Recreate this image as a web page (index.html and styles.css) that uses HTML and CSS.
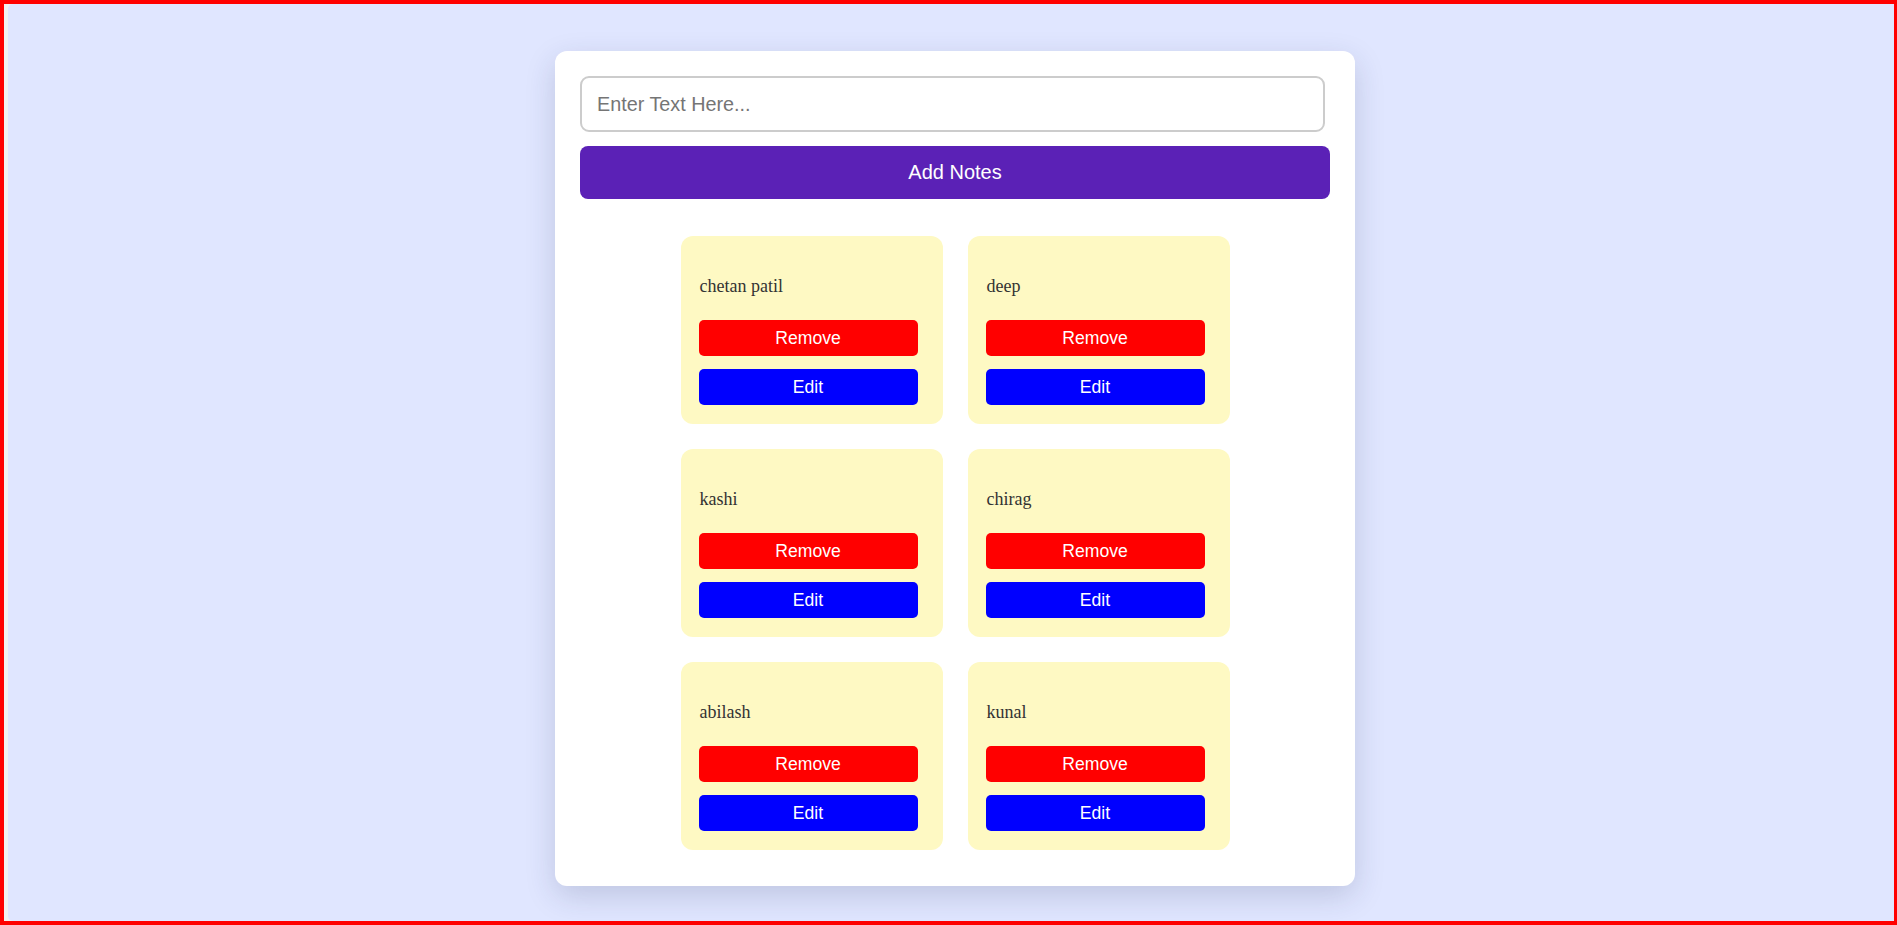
FILE: index.html
```html
<!DOCTYPE html>
<html lang="en">
<head>
<meta charset="UTF-8">
<title>Notes</title>
<link rel="stylesheet" href="styles.css">
</head>
<body>
<div class="frame">
  <div class="strip"></div>
  <div class="page">
    <div class="container">
      <input class="note-input" type="text" placeholder="Enter Text Here...">
      <button class="add-btn">Add Notes</button>
      <div class="notes">
        <div class="note"><p>chetan patil</p><button class="btn remove">Remove</button><button class="btn edit">Edit</button></div>
        <div class="note"><p>deep</p><button class="btn remove">Remove</button><button class="btn edit">Edit</button></div>
        <div class="note"><p>kashi</p><button class="btn remove">Remove</button><button class="btn edit">Edit</button></div>
        <div class="note"><p>chirag</p><button class="btn remove">Remove</button><button class="btn edit">Edit</button></div>
        <div class="note"><p>abilash</p><button class="btn remove">Remove</button><button class="btn edit">Edit</button></div>
        <div class="note"><p>kunal</p><button class="btn remove">Remove</button><button class="btn edit">Edit</button></div>
      </div>
    </div>
  </div>
</div>
</body>
</html>
```
FILE: styles.css
```css
html, body {
  margin: 0;
  padding: 0;
}
body {
  font-family: "Liberation Sans", Arial, sans-serif;
}
.frame {
  box-sizing: border-box;
  height: 925px;
  border: 4px solid #ff0000;
  border-right-width: 3px;
  background: #f2f2f2;
  display: flex;
}
.strip {
  width: 4px;
  flex: none;
}
.page {
  flex: 1;
  background: #e0e6ff;
  border-radius: 5px 0 0 5px;
  display: flex;
  align-items: flex-start;
  justify-content: center;
  padding-left: 8px;
  padding-top: 47px;
}
.container {
  box-sizing: border-box;
  width: 800px;
  background: #ffffff;
  border-radius: 12px;
  padding: 25px 25px 36px;
  box-shadow: 0 10px 30px rgba(40, 50, 90, 0.18);
  display: flex;
  flex-direction: column;
}
.note-input {
  box-sizing: border-box;
  width: 745px;
  height: 56px;
  border: 2px solid #cccccc;
  border-radius: 9px;
  padding: 0 15px;
  font-family: "Liberation Sans", Arial, sans-serif;
  font-size: 19.8px;
  color: #333;
  outline: none;
}
.note-input::placeholder {
  color: #757575;
}
.add-btn {
  margin-top: 14px;
  height: 53px;
  width: 750px;
  border: none;
  border-radius: 8px;
  background: #5b21b6;
  color: #ffffff;
  font-family: "Liberation Sans", Arial, sans-serif;
  font-size: 20px;
}
.notes {
  margin-top: 37px;
  display: grid;
  grid-template-columns: 262px 262px;
  gap: 25px;
  justify-content: center;
}
.note {
  box-sizing: border-box;
  height: 188px;
  background: #fef9c3;
  border-radius: 12px;
  padding: 18px 25px 19px 19px;
  display: flex;
  flex-direction: column;
}
.note p {
  margin: 22px 0 24px;
  font-family: "Liberation Serif", "Times New Roman", serif;
  font-size: 18px;
  line-height: 20px;
  height: 20px;
  color: #333333;
}
.btn {
  width: 219px;
  height: 36px;
  border: none;
  border-radius: 5px;
  color: #ffffff;
  font-family: "Liberation Sans", Arial, sans-serif;
  font-size: 17.6px;
  padding: 0;
  margin-left: -1px;
}
.remove {
  background: #ff0000;
}
.edit {
  background: #0000ff;
  margin-top: 13px;
}
```
